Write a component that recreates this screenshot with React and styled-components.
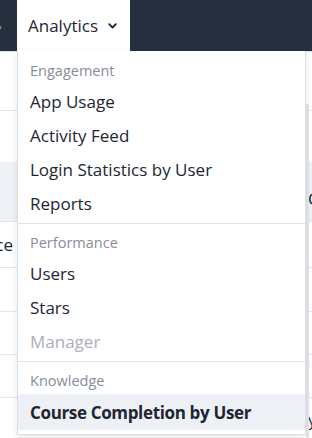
import React from "react";
import styled, { createGlobalStyle } from "styled-components";

const Global = createGlobalStyle`
  html, body { margin: 0; padding: 0; background: #ffffff; }
  body { font-family: "Open Sans", "Liberation Sans", sans-serif; overflow: hidden; }
  * { box-sizing: border-box; }
`;

const Page = styled.div`
  position: relative;
  width: 312px;
  height: 438px;
  overflow: hidden;
`;

const TopBar = styled.header`
  height: 51px;
  background: #252f3e;
  display: flex;
  align-items: stretch;
`;

const Stub = styled.div`
  width: 17px;
  display: flex;
  align-items: center;
  color: #8b93a0;
  font-size: 16px;
  overflow: hidden;
  justify-content: flex-end;
  white-space: nowrap;
  padding-right: 15px;
`;

const Tab = styled.div`
  background: #ffffff;
  width: 113px;
  display: flex;
  align-items: center;
  gap: 10px;
  padding-left: 11px;
  color: #1d2633;
  font-size: 17px;
`;

const Content = styled.div`
  position: relative;
  border-top: 1px solid #dfe3e8;
`;

const Row = styled.div`
  height: ${(p) => p.$h}px;
  background: ${(p) => (p.$gray ? "#eef1f5" : "#ffffff")};
  border-bottom: 1px solid ${(p) => (p.$line ? "#e3e6eb" : "transparent")};
  display: flex;
  align-items: ${(p) => p.$align || "center"};
  justify-content: space-between;
  font-size: 17px;
  color: #1d2633;
`;

const EdgeLeft = styled.div`
  width: 13px;
  display: flex;
  justify-content: flex-end;
  white-space: nowrap;
`;

const EdgeRight = styled.div`
  width: 4px;
  overflow: visible;
  white-space: nowrap;
  padding-top: ${(p) => p.$pt || 0}px;
`;

const Scroll = styled.div`
  position: absolute;
  top: 52px;
  right: 3px;
  width: 3px;
  bottom: 0;
  background: #e4e7ec;
`;

const Menu = styled.nav`
  position: absolute;
  top: 51px;
  left: 17px;
  width: 289px;
  background: #ffffff;
  border: 1px solid #dde1e7;
  border-top: none;
  box-shadow: 0 2px 6px rgba(30, 40, 55, 0.12);
  padding-top: 6px;
  display: flex;
  flex-direction: column;
`;

const Section = styled.div`
  display: flex;
  flex-direction: column;
  padding-bottom: 3px;
  border-bottom: 1px solid ${(p) => (p.$last ? "transparent" : "#dfe3e8")};
  & + & {
    padding-top: 5px;
  }
`;

const Heading = styled.div`
  height: 27px;
  display: flex;
  align-items: center;
  padding-left: 12px;
  font-size: 14.5px;
  color: #868d98;
`;

const Item = styled.div`
  height: ${(p) => (p.$active ? 36 : 34)}px;
  display: flex;
  align-items: center;
  padding-left: 12px;
  font-size: 17px;
  letter-spacing: ${(p) => (p.$active ? "-0.35px" : "0")};
  color: ${(p) => (p.$disabled ? "#a9afb8" : "#1d2633")};
  font-weight: ${(p) => (p.$active ? 700 : 400)};
  background: ${(p) => (p.$active ? "#edf0f4" : "transparent")};
`;

const sections = [
  {
    title: "Engagement",
    items: [{ label: "App Usage" }, { label: "Activity Feed" }, { label: "Login Statistics by User" }, { label: "Reports" }],
  },
  {
    title: "Performance",
    items: [{ label: "Users" }, { label: "Stars" }, { label: "Manager", disabled: true }],
  },
  {
    title: "Knowledge",
    items: [{ label: "Course Completion by User", active: true }],
    last: true,
  },
];

const Chevron = () => (
  <svg width="9" height="6" viewBox="0 0 9 6" fill="none">
    <polyline points="1.2,1.2 4.5,4.5 7.8,1.2" stroke="#1d2633" strokeWidth="1.8" strokeLinecap="round" strokeLinejoin="round" />
  </svg>
);

export default function App() {
  return (
    <Page>
      <Global />
      <TopBar>
        <Stub>Reports ›</Stub>
        <Tab>
          Analytics
          <Chevron />
        </Tab>
      </TopBar>
      <Content>
        <Row $h={59} $line />
        <Row $h={51} />
        <Row $h={60} $gray $line $align="flex-start">
          <EdgeLeft />
          <EdgeRight $pt={25}>C</EdgeRight>
        </Row>
        <Row $h={46} $line>
          <EdgeLeft>Performance</EdgeLeft>
        </Row>
        <Row $h={44} $line />
        <Row $h={43} $line />
        <Row $h={43} $line />
        <Row $h={43}>
          <EdgeLeft />
          <EdgeRight>y</EdgeRight>
        </Row>
        <Scroll />
      </Content>
      <Menu>
        {sections.map((s) => (
          <Section key={s.title} $last={s.last}>
            <Heading>{s.title}</Heading>
            {s.items.map((it) => (
              <Item key={it.label} $disabled={it.disabled} $active={it.active}>
                {it.label}
              </Item>
            ))}
          </Section>
        ))}
      </Menu>
    </Page>
  );
}
